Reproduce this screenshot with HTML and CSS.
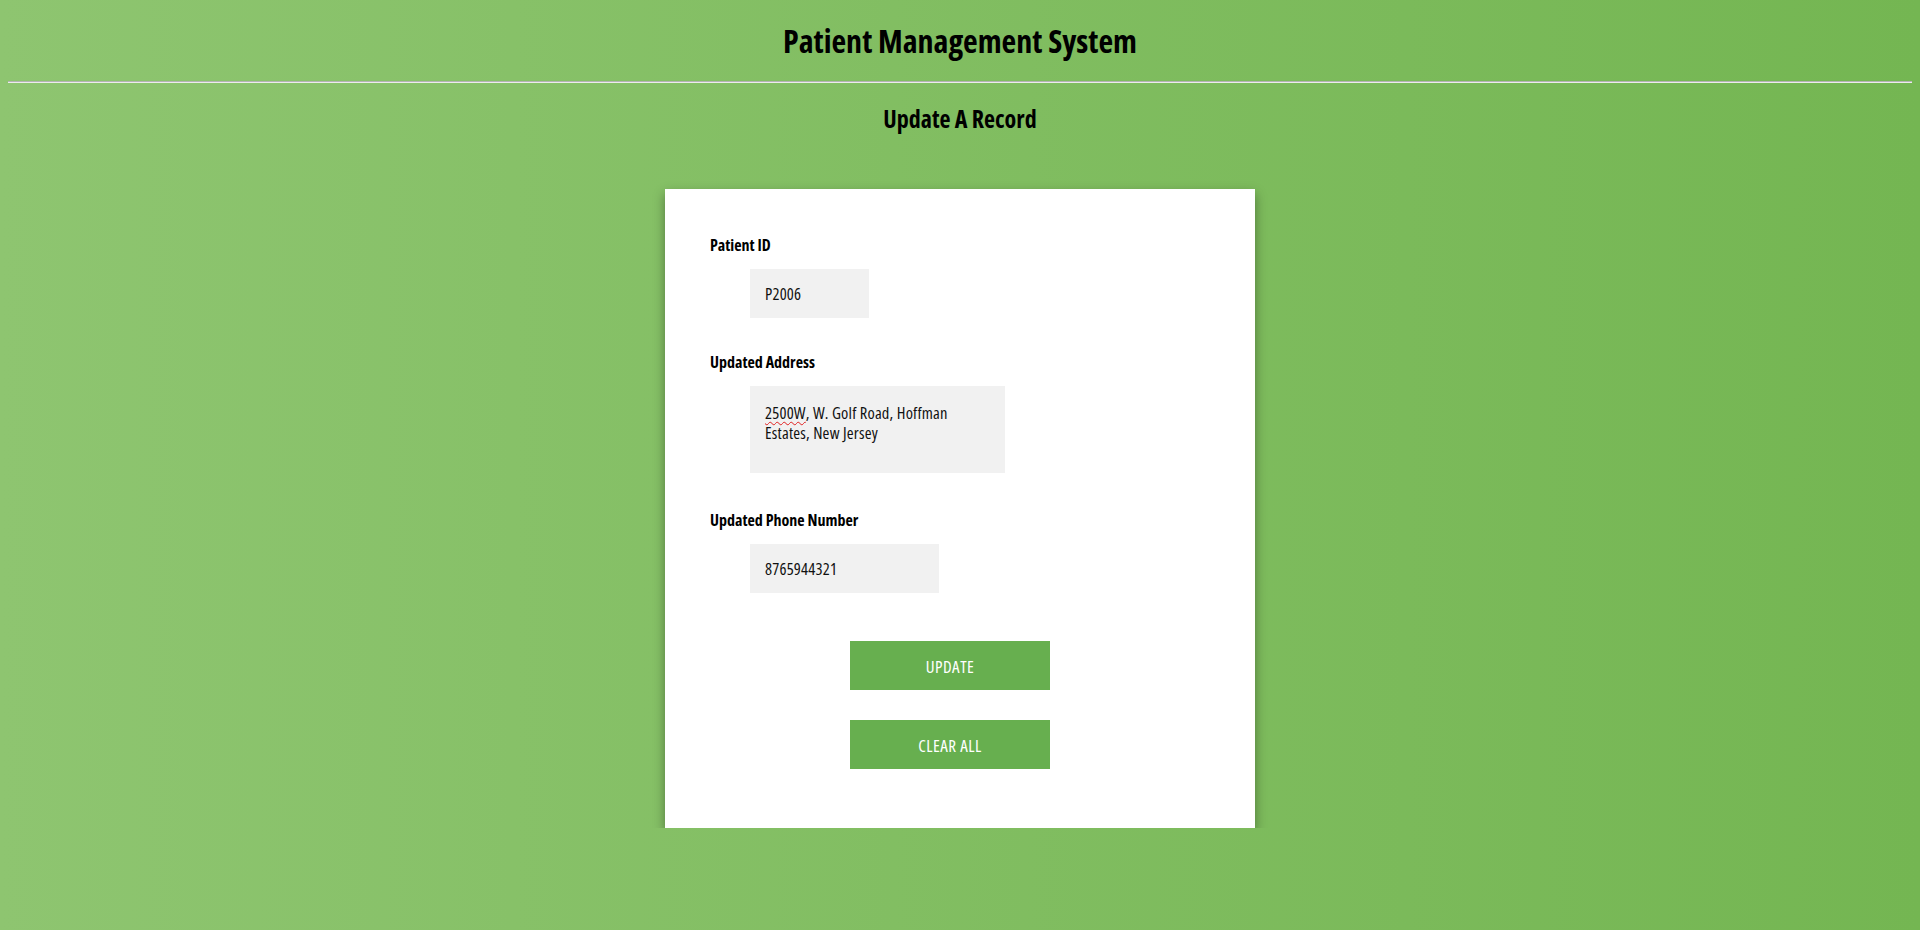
FILE: index.html
```html
<!DOCTYPE html>
<html lang="en">
<head>
<meta charset="utf-8">
<title>Patient Management System - Update A Record</title>
<link rel="stylesheet" href="styles.css">
</head>
<body>
  <h1 class="app-title">Patient Management System</h1>
  <hr class="divider">
  <h2 class="page-title">Update A Record</h2>

  <form class="card" onsubmit="return false;">
    <label class="field-label" for="pid">Patient ID</label>
    <input class="field field-id" id="pid" type="text" value="P2006">

    <label class="field-label gap-lg" for="addr">Updated Address</label>
    <div class="field field-area" id="addr" role="textbox" contenteditable="true"><span class="misspelt">2500W</span>, W. Golf Road, Hoffman<br>Estates, New Jersey</div>

    <label class="field-label gap-xl" for="phone">Updated Phone Number</label>
    <input class="field field-phone" id="phone" type="text" value="8765944321">

    <button class="btn btn-first" type="submit">UPDATE</button>
    <button class="btn btn-next" type="reset">CLEAR ALL</button>
  </form>
</body>
</html>
```

FILE: styles.css
```css
html {
  min-height: 100%;
  background: linear-gradient(to right, #8ec570 0%, #74b652 100%);
}

body {
  margin: 0 8px;
  padding: 0;
  font-family: "Open Sans", "Lato", sans-serif;
  font-stretch: 75%;
  color: #000;
}

.app-title {
  margin: 22px 0 22px;
  font-size: 32px;
  line-height: 37px;
  font-weight: 700;
  text-align: center;
}

.divider {
  margin: 0;
  border: 0;
  border-top: 1px solid #b4b4b4;
  border-bottom: 1px solid #ececec;
  height: 0;
}

.page-title {
  margin: 22px 0 56px;
  font-size: 24px;
  line-height: 28px;
  font-weight: 700;
  text-align: center;
}

.card {
  box-sizing: border-box;
  width: 590px;
  margin: 0 auto;
  padding: 47px 45px 59px;
  background: #fff;
  box-shadow: 0 5px 11px rgba(0, 0, 0, 0.38);
  display: flex;
  flex-direction: column;
  align-items: flex-start;
}

.field-label {
  display: block;
  font-size: 16px;
  line-height: 18px;
  font-weight: 700;
}

.gap-lg {
  margin-top: 35px;
}

.gap-xl {
  margin-top: 38px;
}

.field {
  box-sizing: border-box;
  margin: 15px 0 0 40px;
  border: none;
  outline: none;
  background: #f1f1f1;
  color: #111;
  font-family: inherit;
  font-stretch: 75%;
  font-size: 16.5px;
  letter-spacing: 0.2px;
  height: 49px;
  padding: 0 15px;
}

.field-id {
  width: 119px;
}

.field-phone {
  width: 189px;
}

.field-area {
  width: 255px;
  height: 87px;
  padding: 17px 15px 0;
  line-height: 19.5px;
  white-space: nowrap;
}

.misspelt {
  text-decoration: underline wavy #e02020;
  text-decoration-thickness: 1px;
  text-underline-offset: 2px;
}

.btn {
  box-sizing: border-box;
  width: 200px;
  height: 49px;
  margin-left: 140px;
  padding-top: 2px;
  border: none;
  background: #67af4f;
  color: #fff;
  font-family: inherit;
  font-stretch: 87%;
  font-size: 17px;
  letter-spacing: 0.5px;
  cursor: pointer;
}

.btn-first {
  margin-top: 48px;
}

.btn-next {
  margin-top: 30px;
}
```
